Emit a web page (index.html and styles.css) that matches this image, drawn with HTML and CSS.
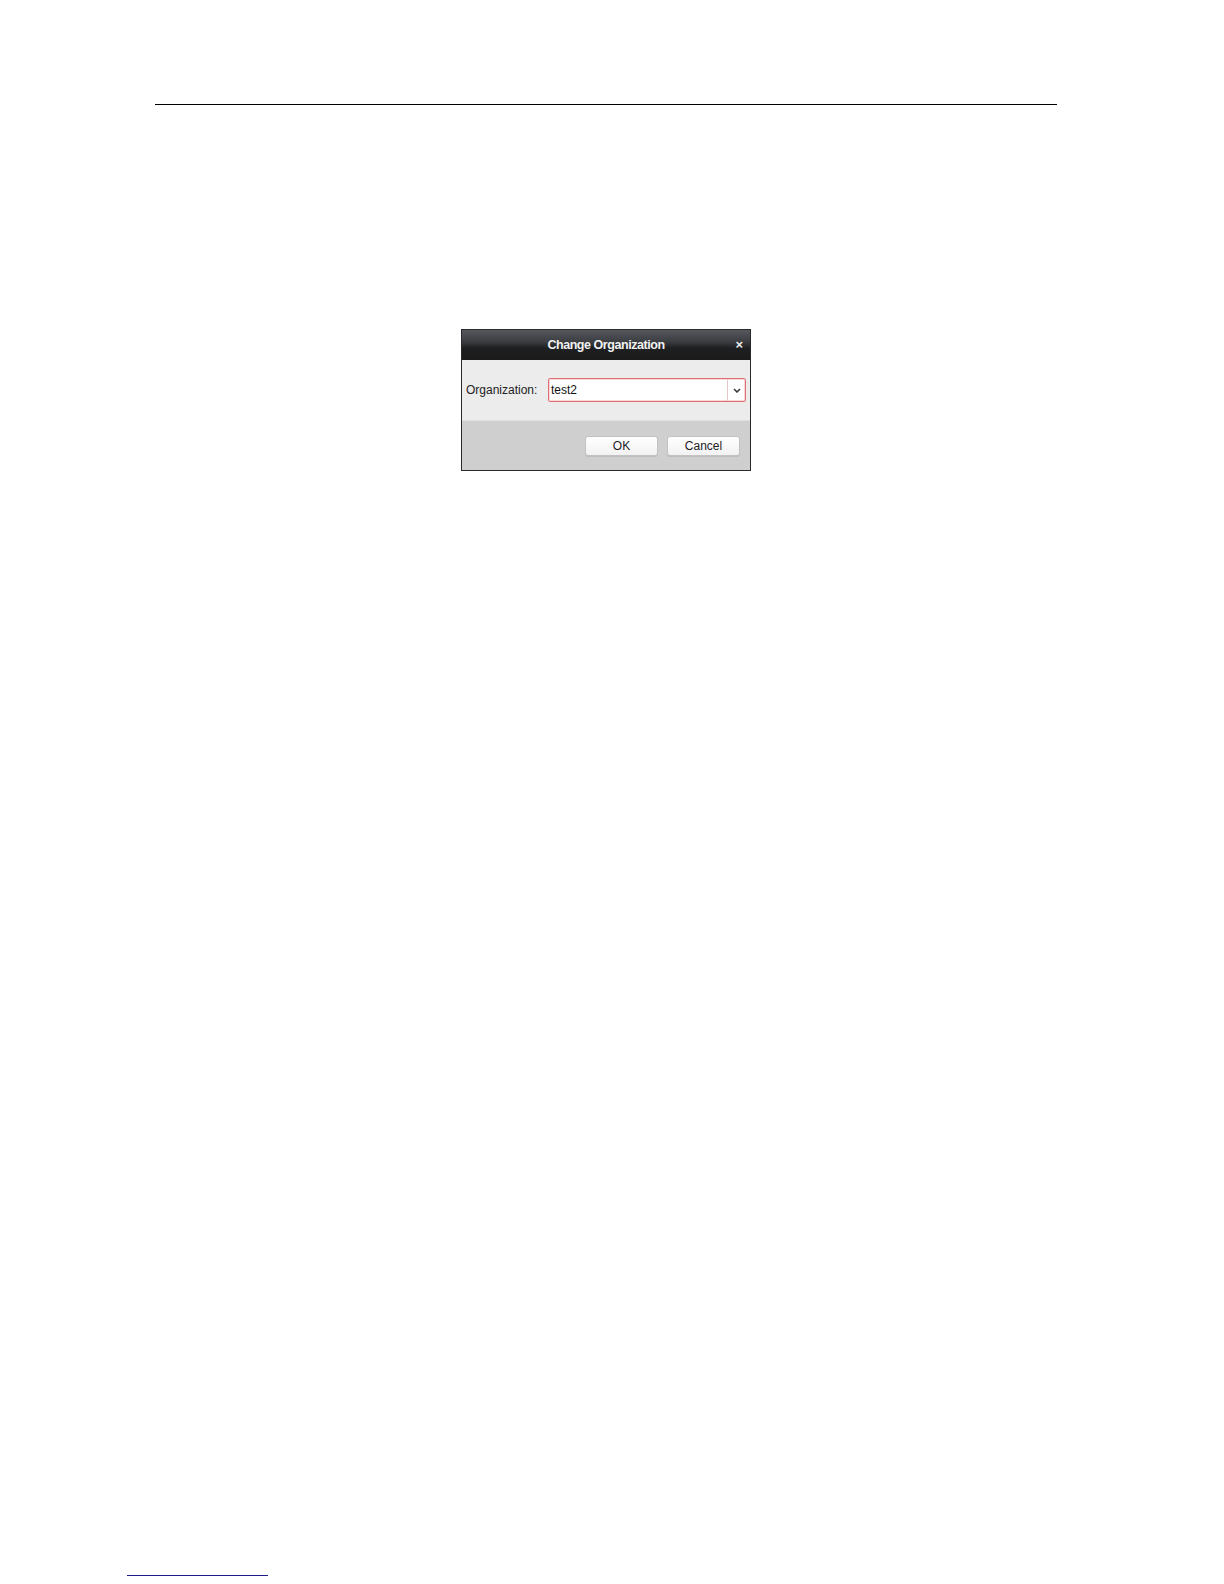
FILE: index.html
```html
<!DOCTYPE html>
<html>
<head>
<meta charset="utf-8">
<link rel="stylesheet" href="styles.css">
</head>
<body>
<div class="page">
  <div class="top-rule"></div>
  <div class="dialog">
    <div class="dialog-title">
      <span class="title-text">Change Organization</span>
      <span class="close">&#xD7;</span>
    </div>
    <div class="dialog-body">
      <span class="label">Organization:</span>
      <div class="select">
        <span class="select-value">test2</span>
        <span class="select-arrow">
          <svg width="8" height="5" viewBox="0 0 8 5"><path d="M1 1 L4 4 L7 1" fill="none" stroke="#333" stroke-width="1.5"/></svg>
        </span>
      </div>
    </div>
    <div class="dialog-footer">
      <button class="btn">OK</button>
      <button class="btn">Cancel</button>
    </div>
  </div>
  <div class="bottom-rule"></div>
</div>
</body>
</html>
```
FILE: styles.css
```css
html, body {
  margin: 0;
  padding: 0;
  background: #fff;
}
.page {
  width: 1224px;
  height: 1584px;
  font-family: "Liberation Sans", Arial, sans-serif;
  display: flex;
  flex-direction: column;
}
.top-rule {
  margin-top: 104px;
  margin-left: 155px;
  width: 902px;
  height: 1px;
  background: #000;
}
.dialog {
  margin-top: 224px;
  margin-left: 461px;
  width: 288px;
  border: 1px solid #2a2a2a;
  display: flex;
  flex-direction: column;
}
.dialog-title {
  height: 30px;
  background: linear-gradient(#55585d 0%, #3a3c40 40%, #1e1f21 60%, #1b1b1b 100%);
  display: flex;
  align-items: center;
  justify-content: center;
  position: relative;
}
.title-text {
  color: #f2f2f2;
  font-weight: bold;
  font-size: 12.5px;
  letter-spacing: -0.45px;
}
.close {
  position: absolute;
  right: 7px;
  top: 8px;
  color: #ececec;
  font-size: 13px;
  font-weight: bold;
  line-height: 13px;
}
.dialog-body {
  height: 60px;
  background: #ececec;
  display: flex;
  align-items: center;
  padding-left: 4px;
  border-bottom: 1px solid #e0e0e0;
}
.label {
  font-size: 12px;
  color: #222;
  width: 82px;
}
.select {
  width: 196px;
  height: 22px;
  border: 1px solid #df6f75;
  border-radius: 2px;
  background: #fff;
  display: flex;
  align-items: center;
  box-shadow: inset 0 0 0 1px #f6d8da;
}
.select-value {
  flex: 1;
  font-size: 12px;
  color: #111;
  padding-left: 2px;
}
.select-arrow {
  width: 17px;
  height: 100%;
  border-left: 1px solid #e5c9cb;
  display: flex;
  align-items: center;
  justify-content: center;
}
.dialog-footer {
  height: 49px;
  background: #cfcfcf;
  display: flex;
  justify-content: flex-end;
  align-items: flex-start;
  padding-top: 15px;
  padding-right: 10px;
  gap: 9px;
  box-sizing: border-box;
}
.btn {
  width: 73px;
  height: 20px;
  border: 1px solid #c2c2c2;
  border-radius: 3px;
  background: linear-gradient(#ffffff, #f2f2f2);
  font-family: "Liberation Sans", Arial, sans-serif;
  font-size: 12px;
  color: #222;
  padding: 0;
  box-shadow: 0 1px 0 #bdbdbd;
}
.bottom-rule {
  margin-top: auto;
  margin-bottom: 8px;
  margin-left: 127px;
  width: 141px;
  height: 1px;
  background: #1c1c8a;
}
```
